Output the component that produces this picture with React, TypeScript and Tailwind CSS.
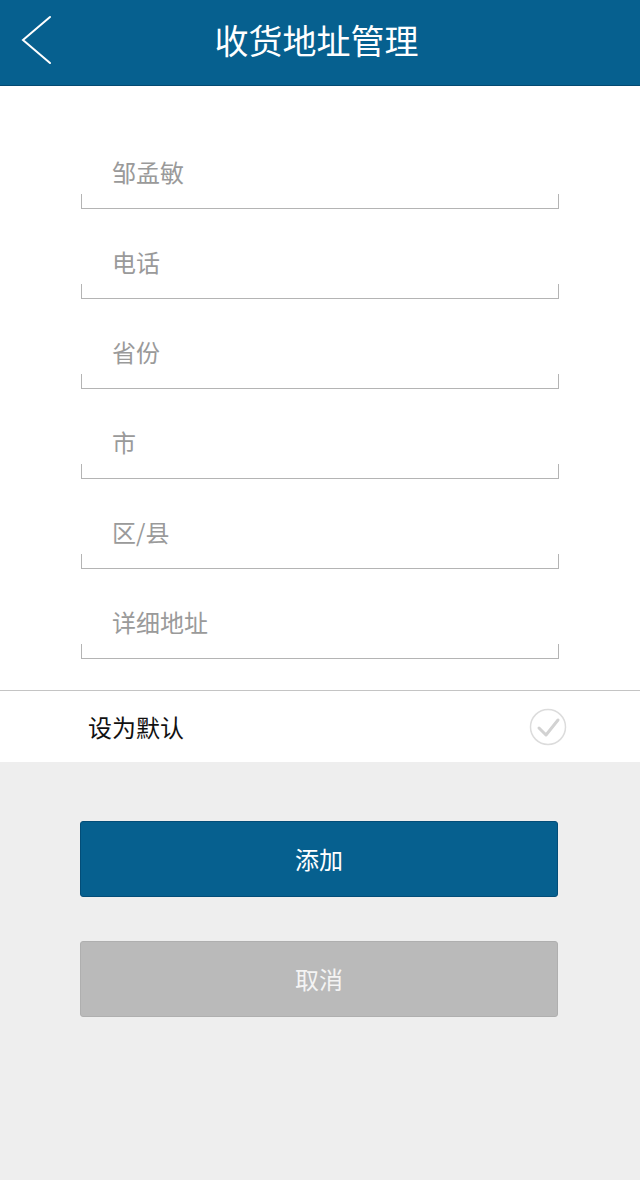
const fields = ["邹孟敏", "电话", "省份", "市", "区/县", "详细地址"];

const font = { fontFamily: '"Noto Sans CJK SC", "Noto Sans", sans-serif' };

function Field({ label }: { label: string }) {
  return (
    <div className="flex h-[90px] flex-col justify-end">
      <div className="mb-[6px] h-8 pl-[112px] text-[24px] leading-8 text-[#9a9a9a]">{label}</div>
      <div className="ml-[81px] h-[15px] w-[478px] border-x border-b border-[#b4b4b4]" />
    </div>
  );
}

export default function App() {
  return (
    <div className="flex min-h-[1180px] w-[640px] flex-col bg-[#eeeeee]" style={font}>
      <header className="relative flex h-[86px] items-center justify-center border-b border-[#044a72] bg-[#06608f] pb-[6px]">
        <svg className="absolute left-[20px] top-[15px]" width="34" height="52" viewBox="0 0 34 52">
          <path d="M30 2 L3 25 L30 48" fill="none" stroke="#ffffff" strokeWidth="2" strokeLinecap="round" strokeLinejoin="miter" />
        </svg>
        <h1 className="mr-[7px] text-[34px] font-normal leading-none text-white">收货地址管理</h1>
      </header>

      <main className="bg-white">
        <div className="pt-[33px] pb-[31px]">
          {fields.map((f) => (
            <Field key={f} label={f} />
          ))}
        </div>
        <div className="flex h-[72px] items-center justify-between border-t border-[#c4c4c4] pl-[88px] pr-[73px]">
          <span className="text-[24px] text-[#111111]">设为默认</span>
          <svg width="38" height="38" viewBox="0 0 38 38">
            <circle cx="19" cy="19" r="17.5" fill="none" stroke="#dcdcdc" strokeWidth="1.5" />
            <path d="M10 20 L17 27 L29 12" fill="none" stroke="#d2d2d2" strokeWidth="3" strokeLinecap="round" strokeLinejoin="round" />
          </svg>
        </div>
      </main>

      <section className="flex flex-col gap-[44px] px-[80px] pt-[59px]">
        <button className="h-[76px] w-[478px] rounded-[3px] border border-[#034d78] bg-[#06608f] text-[24px] text-white">
          添加
        </button>
        <button className="h-[76px] w-[478px] rounded-[3px] border border-[#afafaf] bg-[#bababa] text-[24px] text-[#f4f4f4]">
          取消
        </button>
      </section>
    </div>
  );
}
